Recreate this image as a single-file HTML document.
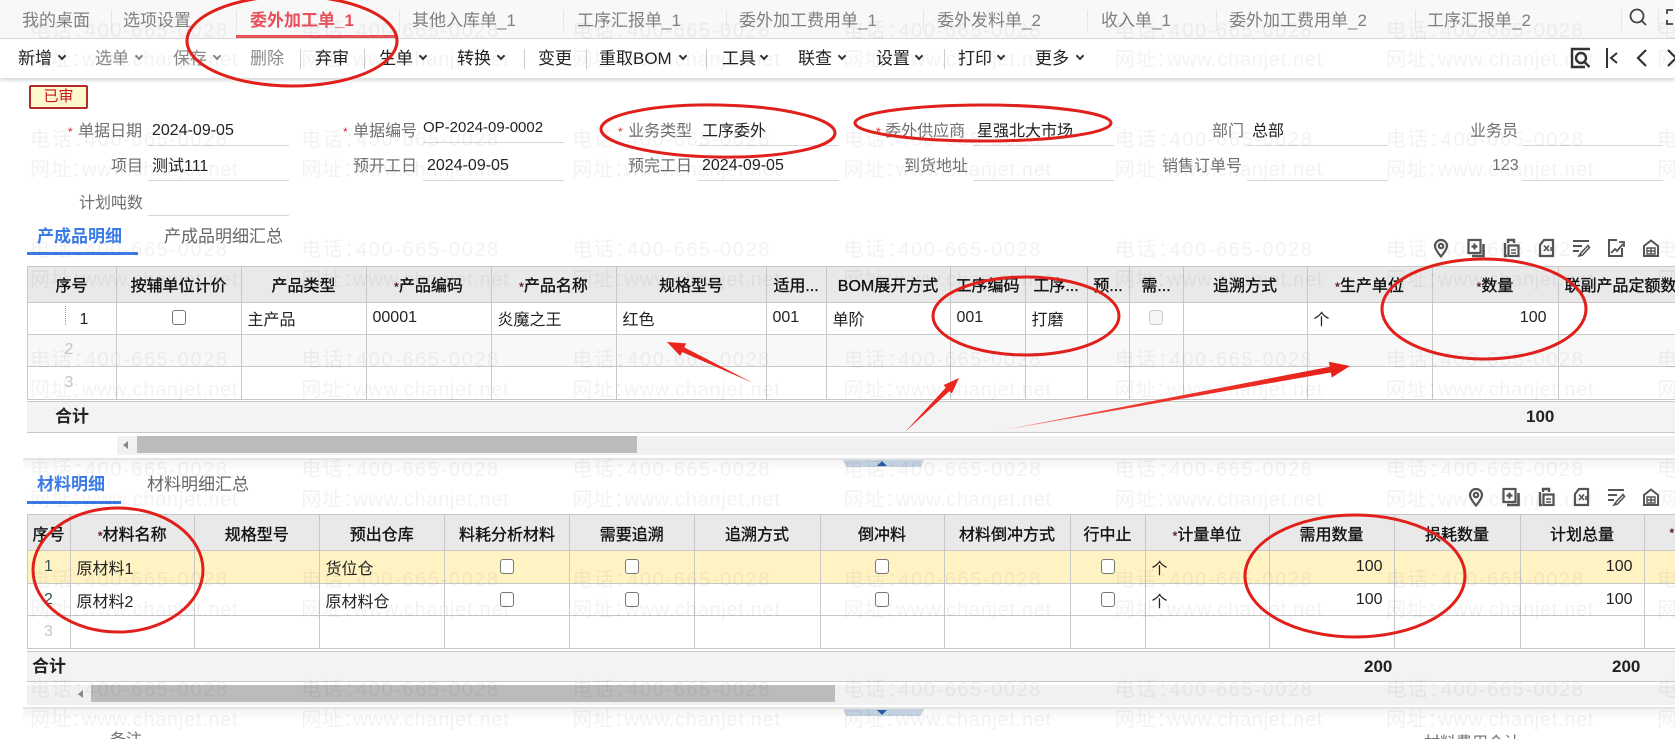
<!DOCTYPE html>
<html lang="zh"><head><meta charset="utf-8"><title>委外加工单</title>
<style>
*{box-sizing:border-box}
html,body{margin:0;padding:0;width:1675px;height:739px;overflow:hidden;background:#fff}
body{position:relative;font-family:"Liberation Sans","Noto Sans CJK SC",sans-serif;font-size:16px;color:#222}
.abs,.tabs span,.tools span,.tools i,.f{position:absolute;white-space:nowrap}
.tabs{position:absolute;left:0;top:0;width:1675px;height:39px;background:#f8f8f8;border-bottom:1px solid #ddd}
.tabs span{top:9px;line-height:24px;font-size:17px;color:#808080}
.tabs span.on{color:#e8505b;font-weight:bold}
.tabs u{position:absolute;top:10px;width:1px;height:21px;background:#e6e6e6}
.tabs em{position:absolute;left:236px;top:35px;width:161px;height:3px;background:#e8505b}
.tools{position:absolute;left:0;top:39px;width:1675px;height:39px;background:#fff;box-shadow:0 2px 4px rgba(0,0,0,.18)}
.tools span{top:8px;line-height:24px;font-size:17px;color:#222}
.tools .g{color:#8a8a8a}
.tools i{top:14px;width:6px;height:6px;border-right:2px solid #333;border-bottom:2px solid #333;transform:rotate(45deg)}
.tools i.g{border-color:#888}
.tools u{position:absolute;top:10px;width:1px;height:20px;background:#ccc}
.f{line-height:22px;font-size:16px}
.l{color:#707070}
.r{color:#e5233a;font-size:12px;font-weight:normal}
.ln{position:absolute;height:1px;background:#d8d8d8;width:141px}
.tab1{position:absolute;line-height:24px;font-size:17px;color:#666}
.tab1.on{color:#3b7be8;font-weight:bold}
.bar{position:absolute;height:3px;background:#3b7be8}
table{position:absolute;border-collapse:collapse;table-layout:fixed;left:26.500px;border-top:1px solid #c8c8c8;border-left:1px solid #c8c8c8}
th,td{border:1px solid #c8c8c8;padding:0;white-space:nowrap;overflow:hidden;font-size:16px}
th{background:#e9e9e9;font-weight:normal;color:#111;-webkit-text-stroke:.35px #111;text-align:center}
td{padding:0 6px;color:#222}
.n{text-align:right;padding-right:11px}
.c{text-align:center}
.cb{display:inline-block;width:14px;height:15px;border:1px solid #777;border-radius:3px;background:#fff;vertical-align:middle}
.cb.d{border-color:#ccc;background:#f5f5f5}
.sum{position:absolute;left:27px;width:1648px;background:#f3f3f3;border-top:1px solid #c8c8c8;border-bottom:1px solid #c8c8c8}
.sum b{position:absolute;font-size:17px;line-height:24px;color:#222;top:3px}
.track{position:absolute;background:#f1f1f1}
.thumb{position:absolute;background:#bbb}
.split{position:absolute;left:843px;width:81px;height:7px;background:#c3d0e0;clip-path:polygon(0 0,100% 0,96% 100%,4% 100%)}
.div{position:absolute;left:23px;width:1652px;height:14px;border-top:2px solid #e4e4e4;background:linear-gradient(#f4f4f4,#fff)}
.wm{position:absolute;left:30px;white-space:nowrap;font-size:20px;line-height:24px;color:rgba(0,0,0,.05);pointer-events:none;font-feature-settings:"halt"}
.wm span{display:inline-block;width:271.2px}
.t{letter-spacing:1.6px}.w{letter-spacing:.7px}
svg.ic{position:absolute;width:20px;height:20px;fill:none;stroke:#555;stroke-width:2.200}
</style></head>
<body>
<svg width="0" height="0" style="position:absolute">
<symbol id="pin" viewBox="0 0 20 20"><path d="M10 2a6 6 0 0 1 6 6c0 3.600-6 10.500-6 10.500S4 11.600 4 8a6 6 0 0 1 6-6z"/><circle cx="10" cy="8" r="2.200"/></symbol>
<symbol id="add" viewBox="0 0 20 20"><path d="M2.500 2h12v13h-12z"/><path d="M17.500 6v12H6" stroke-width="2.600"/><path d="M8.500 5.500v6M5.500 8.500h6"/></symbol>
<symbol id="paste" viewBox="0 0 20 20"><path d="M4 5v13h2M7 5V2h6v3" stroke-width="2.400"/><path d="M7.500 7.500h10v10.500h-10z"/><path d="M10 12h5M10 15h5" stroke-width="1.500"/></symbol>
<symbol id="del" viewBox="0 0 20 20"><path d="M4 7v11h13v-16H8z"/><path d="M8 7.500l5 5.500M13 7.500l-5 5.500M15 9v4" stroke-width="1.600"/></symbol>
<symbol id="edit" viewBox="0 0 20 20"><path d="M2 3h16M2 8h9M2 13h6" stroke-width="2"/><path d="M17 7.500l-7 7.500-2 3 3.500-1 7-7.500z" stroke-width="1.600"/></symbol>
<symbol id="chart" viewBox="0 0 20 20"><path d="M11 2H3v16h13v-8" stroke-width="2"/><path d="M5 15l4-4 2 2 6-7M13 4h5v5" stroke-width="1.800"/></symbol>
<symbol id="house" viewBox="0 0 20 20"><path d="M3 18V8l7-5.500L17 8v10z" stroke-width="2"/><path d="M6 10h8v6H6zM10 10v6M6 13h8" stroke-width="1.400"/></symbol>
</svg>

<div class="tabs">
<span style="left:22px">我的桌面</span><span style="left:123px">选项设置</span><span class="on" style="left:250px">委外加工单_1</span><span style="left:412px">其他入库单_1</span><span style="left:577px">工序汇报单_1</span><span style="left:739px">委外加工费用单_1</span><span style="left:937px">委外发料单_2</span><span style="left:1101px">收入单_1</span><span style="left:1229px">委外加工费用单_2</span><span style="left:1427px">工序汇报单_2</span>
<u style="left:111px"></u><u style="left:236px"></u><u style="left:399px"></u><u style="left:563px"></u><u style="left:726px"></u><u style="left:923px"></u><u style="left:1087px"></u><u style="left:1216px"></u><u style="left:1415px"></u><u style="left:1621px"></u><u style="left:1658px"></u>
<em></em>
<svg class="abs" style="left:1628px;top:7px;width:20px;height:20px;fill:none;stroke:#444;stroke-width:1.800" viewBox="0 0 20 20"><circle cx="9" cy="9" r="6.500"/><path d="M14 14l4 4"/></svg>
<svg class="abs" style="left:1666px;top:9px;width:12px;height:16px;fill:none;stroke:#444;stroke-width:1.800" viewBox="0 0 12 16"><path d="M1 5V1h6M1 11v4h6"/></svg>
</div>

<div class="tools">
<span style="left:18px">新增</span><i style="left:59px"></i>
<span class="g" style="left:95px">选单</span><i class="g" style="left:136px"></i>
<span class="g" style="left:173px">保存</span><i class="g" style="left:214px"></i>
<span class="g" style="left:250px">删除</span><u style="left:300px"></u>
<span style="left:315px">弃审</span><u style="left:364px"></u>
<span style="left:379px">生单</span><i style="left:420px"></i>
<span style="left:457px">转换</span><i style="left:498px"></i><u style="left:524px"></u>
<span style="left:538px">变更</span><u style="left:586px"></u>
<span style="left:599px">重取BOM</span><i style="left:680px"></i><u style="left:706px"></u>
<span style="left:722px">工具</span><i style="left:761px"></i>
<span style="left:798px">联查</span><i style="left:839px"></i>
<span style="left:876px">设置</span><i style="left:916px"></i><u style="left:944px"></u>
<span style="left:958px">打印</span><i style="left:998px"></i>
<span style="left:1035px">更多</span><i style="left:1077px"></i>
<svg class="abs" style="left:1570px;top:8px;width:22px;height:22px;fill:none;stroke:#333;stroke-width:2.400" viewBox="0 0 22 22"><path d="M20 2H2v18h13"/><circle cx="11" cy="11" r="5"/><path d="M14.500 15l5 5"/></svg>
<svg class="abs" style="left:1605px;top:9px;width:14px;height:20px;fill:none;stroke:#333;stroke-width:2" viewBox="0 0 14 20"><path d="M2 0v20M12 5L6 10l6 5"/></svg>
<svg class="abs" style="left:1636px;top:9px;width:12px;height:20px;fill:none;stroke:#333;stroke-width:2.200" viewBox="0 0 12 20"><path d="M10 2L2 10l8 8"/></svg>
<svg class="abs" style="left:1666px;top:9px;width:12px;height:20px;fill:none;stroke:#333;stroke-width:2.200" viewBox="0 0 12 20"><path d="M2 2l8 8-8 8"/></svg>
</div>

<div class="abs" style="left:29px;top:85px;width:59px;height:24px;background:#fff9cc;border:2px solid #b32a2a;border-radius:2px;color:#c4161c;font-size:15px;line-height:20px;text-align:center">已审</div>

<!-- form row 1 -->
<span class="f l" style="left:68px;top:121px"><b class="r">*</b> <span style="margin-left:1px">单据日期</span></span><span class="f" style="left:152px;top:120px">2024-09-05</span><div class="ln" style="left:148px;top:145px"></div>
<span class="f l" style="left:343px;top:121px"><b class="r">*</b> <span style="margin-left:1px">单据编号</span></span><span class="f" style="left:423px;top:117px;font-size:15px">OP-2024-09-0002</span><div class="ln" style="left:423px;top:142px"></div>
<span class="f l" style="left:618px;top:121px"><b class="r">*</b> <span style="margin-left:1px">业务类型</span></span><span class="f" style="left:702px;top:121px">工序委外</span><div class="ln" style="left:698px;top:145px"></div>
<span class="f l" style="left:876px;top:121px"><b class="r">*</b> 委外供应商</span><span class="f" style="left:977px;top:121px">星强北大市场</span><div class="ln" style="left:973px;top:145px"></div>
<span class="f l" style="left:1212px;top:121px">部门</span><span class="f" style="left:1252px;top:121px">总部</span><div class="ln" style="left:1247px;top:145px"></div>
<span class="f l" style="left:1470px;top:121px">业务员</span><div class="ln" style="left:1522px;top:145px"></div>
<!-- form row 2 -->
<span class="f l" style="left:111px;top:156px">项目</span><span class="f" style="left:152px;top:156px">测试111</span><div class="ln" style="left:148px;top:180px"></div>
<span class="f l" style="left:353px;top:156px">预开工日</span><span class="f" style="left:427px;top:155px">2024-09-05</span><div class="ln" style="left:423px;top:180px"></div>
<span class="f l" style="left:628px;top:156px">预完工日</span><span class="f" style="left:702px;top:155px">2024-09-05</span><div class="ln" style="left:698px;top:180px"></div>
<span class="f l" style="left:904px;top:156px">到货地址</span><div class="ln" style="left:973px;top:180px"></div>
<span class="f l" style="left:1162px;top:156px">销售订单号</span><div class="ln" style="left:1247px;top:180px"></div>
<span class="f l" style="left:1492px;top:155px">123</span><div class="ln" style="left:1522px;top:180px"></div>
<!-- form row 3 -->
<span class="f l" style="left:79px;top:193px">计划吨数</span><div class="ln" style="left:148px;top:215px"></div>

<!-- section 1 -->
<span class="tab1 on" style="left:37px;top:225px">产成品明细</span><span class="tab1" style="left:164px;top:225px">产成品明细汇总</span>
<div class="bar" style="left:27px;top:252px;width:111px"></div>
<svg class="ic" style="left:1431px;top:238px"><use href="#pin"/></svg><svg class="ic" style="left:1466px;top:238px"><use href="#add"/></svg><svg class="ic" style="left:1501px;top:238px"><use href="#paste"/></svg><svg class="ic" style="left:1536px;top:238px"><use href="#del"/></svg><svg class="ic" style="left:1571px;top:238px"><use href="#edit"/></svg><svg class="ic" style="left:1606px;top:238px"><use href="#chart"/></svg><svg class="ic" style="left:1641px;top:238px"><use href="#house"/></svg>

<table style="top:265.500px;width:1656px">
<colgroup><col style="width:89px"><col style="width:125px"><col style="width:125px"><col style="width:125px"><col style="width:125px"><col style="width:150px"><col style="width:60px"><col style="width:124px"><col style="width:75px"><col style="width:62px"><col style="width:42px"><col style="width:54px"><col style="width:124px"><col style="width:125px"><col style="width:126px"><col style="width:125px"></colgroup>
<tr style="height:36px"><th>序号</th><th>按辅单位计价</th><th>产品类型</th><th><b class="r">*</b>产品编码</th><th><b class="r">*</b>产品名称</th><th>规格型号</th><th>适用...</th><th>BOM展开方式</th><th>工序编码</th><th>工序...</th><th>预...</th><th>需...</th><th>追溯方式</th><th><b class="r">*</b>生产单位</th><th><b class="r">*</b>数量</th><th>联副产品定额数</th></tr>
<tr style="height:32px"><td style="padding:3px 0 0 52px">1</td><td class="c"><span class="cb"></span></td><td>主产品</td><td>00001</td><td>炎魔之王</td><td>红色</td><td>001</td><td>单阶</td><td>001</td><td>打磨</td><td></td><td class="c"><span class="cb d"></span></td><td></td><td>个</td><td class="n">100</td><td></td></tr>
<tr style="height:32px;background:#f8f8f8"><td style="padding-left:37px;color:#c4c4c4">2</td><td></td><td></td><td></td><td></td><td></td><td></td><td></td><td></td><td></td><td></td><td></td><td></td><td></td><td></td><td></td></tr>
<tr style="height:33px"><td style="padding-left:37px;color:#c4c4c4">3</td><td></td><td></td><td></td><td></td><td></td><td></td><td></td><td></td><td></td><td></td><td></td><td></td><td></td><td></td><td></td></tr>
</table>
<div class="abs" style="left:65px;top:306px;height:19px;border-left:1px dotted #999"></div>
<div class="sum" style="top:401px;height:32px"><b style="left:28px">合计</b><b style="left:1499px">100</b></div>
<div class="track" style="left:117px;top:436px;width:1558px;height:19px"></div>
<div class="abs" style="left:123px;top:441px;border:4px solid transparent;border-right:5px solid #888;border-left:0"></div>
<div class="thumb" style="left:137px;top:436px;width:500px;height:17px"></div>
<div class="div" style="top:458px"></div>
<div class="split" style="top:460px"></div>
<div class="abs" style="left:877px;top:461px;border:5px solid transparent;border-bottom:5px solid #2a5ca8;border-top:0"></div>

<!-- section 2 -->
<span class="tab1 on" style="left:37px;top:473px">材料明细</span><span class="tab1" style="left:147px;top:473px">材料明细汇总</span>
<div class="bar" style="left:27px;top:501px;width:94px"></div>
<svg class="ic" style="left:1466px;top:487px"><use href="#pin"/></svg><svg class="ic" style="left:1501px;top:487px"><use href="#add"/></svg><svg class="ic" style="left:1536px;top:487px"><use href="#paste"/></svg><svg class="ic" style="left:1571px;top:487px"><use href="#del"/></svg><svg class="ic" style="left:1606px;top:487px"><use href="#edit"/></svg><svg class="ic" style="left:1641px;top:487px"><use href="#house"/></svg>

<table style="top:514px;width:1743px">
<colgroup><col style="width:43px"><col style="width:124.500px"><col style="width:124.500px"><col style="width:125.500px"><col style="width:125px"><col style="width:124.500px"><col style="width:126px"><col style="width:124px"><col style="width:126px"><col style="width:75px"><col style="width:124px"><col style="width:125px"><col style="width:126px"><col style="width:124px"><col style="width:126px"></colgroup>
<tr style="height:36px"><th>序号</th><th><b class="r">*</b>材料名称</th><th>规格型号</th><th>预出仓库</th><th>料耗分析材料</th><th>需要追溯</th><th>追溯方式</th><th>倒冲料</th><th>材料倒冲方式</th><th>行中止</th><th><b class="r">*</b>计量单位</th><th>需用数量</th><th>损耗数量</th><th>计划总量</th><th style="text-align:left;padding-left:25px"><b class="r">*</b></th></tr>
<tr style="height:33px;background:#fff3c4"><td class="c" style="color:#355">1</td><td>原材料1</td><td></td><td>货位仓</td><td class="c"><span class="cb"></span></td><td class="c"><span class="cb"></span></td><td></td><td class="c"><span class="cb"></span></td><td></td><td class="c"><span class="cb"></span></td><td>个</td><td class="n">100</td><td></td><td class="n">100</td><td></td></tr>
<tr style="height:32px"><td class="c" style="color:#355">2</td><td>原材料2</td><td></td><td>原材料仓</td><td class="c"><span class="cb"></span></td><td class="c"><span class="cb"></span></td><td></td><td class="c"><span class="cb"></span></td><td></td><td class="c"><span class="cb"></span></td><td>个</td><td class="n">100</td><td></td><td class="n">100</td><td></td></tr>
<tr style="height:33px"><td class="c" style="color:#c4c4c4">3</td><td></td><td></td><td></td><td></td><td></td><td></td><td></td><td></td><td></td><td></td><td></td><td></td><td></td><td></td></tr>
</table>
<div class="sum" style="top:651px;height:31px"><b style="left:5px">合计</b><b style="left:1337px">200</b><b style="left:1585px">200</b></div>
<div class="track" style="left:27px;top:685px;width:1648px;height:20px"></div>
<div class="abs" style="left:78px;top:690px;border:4px solid transparent;border-right:5px solid #888;border-left:0"></div>
<div class="thumb" style="left:91px;top:685px;width:744px;height:17px"></div>
<div class="div" style="top:707px"></div>
<div class="split" style="top:709px"></div>
<div class="abs" style="left:877px;top:710px;border:5px solid transparent;border-top:5px solid #2a5ca8;border-bottom:0"></div>
<span class="f l" style="left:110px;top:730px">备注</span>
<span class="f l" style="left:1424px;top:733px">材料费用合计</span>

<!-- watermark -->
<div class="wm" style="top:19px"><span class="t">电话：400-665-0028</span><span class="t">电话：400-665-0028</span><span class="t">电话：400-665-0028</span><span class="t">电话：400-665-0028</span><span class="t">电话：400-665-0028</span><span class="t">电话：400-665-0028</span><span class="t">电话：400-665-0028</span></div>
<div class="wm" style="top:48px"><span class="w">网址：www.chanjet.net</span><span class="w">网址：www.chanjet.net</span><span class="w">网址：www.chanjet.net</span><span class="w">网址：www.chanjet.net</span><span class="w">网址：www.chanjet.net</span><span class="w">网址：www.chanjet.net</span><span class="w">网址：www.chanjet.net</span></div>
<div class="wm" style="top:128px"><span class="t">电话：400-665-0028</span><span class="t">电话：400-665-0028</span><span class="t">电话：400-665-0028</span><span class="t">电话：400-665-0028</span><span class="t">电话：400-665-0028</span><span class="t">电话：400-665-0028</span><span class="t">电话：400-665-0028</span></div>
<div class="wm" style="top:158px"><span class="w">网址：www.chanjet.net</span><span class="w">网址：www.chanjet.net</span><span class="w">网址：www.chanjet.net</span><span class="w">网址：www.chanjet.net</span><span class="w">网址：www.chanjet.net</span><span class="w">网址：www.chanjet.net</span><span class="w">网址：www.chanjet.net</span></div>
<div class="wm" style="top:238px"><span class="t">电话：400-665-0028</span><span class="t">电话：400-665-0028</span><span class="t">电话：400-665-0028</span><span class="t">电话：400-665-0028</span><span class="t">电话：400-665-0028</span><span class="t">电话：400-665-0028</span><span class="t">电话：400-665-0028</span></div>
<div class="wm" style="top:268px"><span class="w">网址：www.chanjet.net</span><span class="w">网址：www.chanjet.net</span><span class="w">网址：www.chanjet.net</span><span class="w">网址：www.chanjet.net</span><span class="w">网址：www.chanjet.net</span><span class="w">网址：www.chanjet.net</span><span class="w">网址：www.chanjet.net</span></div>
<div class="wm" style="top:348px"><span class="t">电话：400-665-0028</span><span class="t">电话：400-665-0028</span><span class="t">电话：400-665-0028</span><span class="t">电话：400-665-0028</span><span class="t">电话：400-665-0028</span><span class="t">电话：400-665-0028</span><span class="t">电话：400-665-0028</span></div>
<div class="wm" style="top:378px"><span class="w">网址：www.chanjet.net</span><span class="w">网址：www.chanjet.net</span><span class="w">网址：www.chanjet.net</span><span class="w">网址：www.chanjet.net</span><span class="w">网址：www.chanjet.net</span><span class="w">网址：www.chanjet.net</span><span class="w">网址：www.chanjet.net</span></div>
<div class="wm" style="top:458px"><span class="t">电话：400-665-0028</span><span class="t">电话：400-665-0028</span><span class="t">电话：400-665-0028</span><span class="t">电话：400-665-0028</span><span class="t">电话：400-665-0028</span><span class="t">电话：400-665-0028</span><span class="t">电话：400-665-0028</span></div>
<div class="wm" style="top:488px"><span class="w">网址：www.chanjet.net</span><span class="w">网址：www.chanjet.net</span><span class="w">网址：www.chanjet.net</span><span class="w">网址：www.chanjet.net</span><span class="w">网址：www.chanjet.net</span><span class="w">网址：www.chanjet.net</span><span class="w">网址：www.chanjet.net</span></div>
<div class="wm" style="top:568px"><span class="t">电话：400-665-0028</span><span class="t">电话：400-665-0028</span><span class="t">电话：400-665-0028</span><span class="t">电话：400-665-0028</span><span class="t">电话：400-665-0028</span><span class="t">电话：400-665-0028</span><span class="t">电话：400-665-0028</span></div>
<div class="wm" style="top:598px"><span class="w">网址：www.chanjet.net</span><span class="w">网址：www.chanjet.net</span><span class="w">网址：www.chanjet.net</span><span class="w">网址：www.chanjet.net</span><span class="w">网址：www.chanjet.net</span><span class="w">网址：www.chanjet.net</span><span class="w">网址：www.chanjet.net</span></div>
<div class="wm" style="top:678px"><span class="t">电话：400-665-0028</span><span class="t">电话：400-665-0028</span><span class="t">电话：400-665-0028</span><span class="t">电话：400-665-0028</span><span class="t">电话：400-665-0028</span><span class="t">电话：400-665-0028</span><span class="t">电话：400-665-0028</span></div>
<div class="wm" style="top:708px"><span class="w">网址：www.chanjet.net</span><span class="w">网址：www.chanjet.net</span><span class="w">网址：www.chanjet.net</span><span class="w">网址：www.chanjet.net</span><span class="w">网址：www.chanjet.net</span><span class="w">网址：www.chanjet.net</span><span class="w">网址：www.chanjet.net</span></div>

<!-- red annotations -->
<svg class="abs" style="left:0;top:0" width="1675" height="739" viewBox="0 0 1675 739" fill="none" stroke="#e0201b" stroke-width="3">
<defs><linearGradient id="fade" x1="0" x2="1" y1="0" y2="0"><stop offset="0" stop-color="#f6a0a0"/><stop offset=".35" stop-color="#ee3a30"/><stop offset="1" stop-color="#e81f17"/></linearGradient></defs>
<ellipse cx="292" cy="41" rx="105" ry="45"/>
<ellipse cx="718" cy="131" rx="117" ry="26" transform="rotate(1 718 131)"/>
<ellipse cx="983" cy="123" rx="128" ry="18"/>
<ellipse cx="1026" cy="316" rx="93" ry="39"/>
<ellipse cx="1484" cy="309" rx="102" ry="50"/>
<ellipse cx="118" cy="570" rx="85" ry="62"/>
<ellipse cx="1355" cy="576" rx="110" ry="61"/>
<g stroke="none">
<polygon fill="#e9261f" points="753,383 684.300,347.400 686.200,343.400 667,342 680.200,356 682.100,352"/>
<polygon fill="#e9261f" points="905,432 949.500,391.100 951.900,393.500 959,378 943.500,385.100 945.900,387.500"/>
<polygon fill="url(#fade)" points="998,431 1330.800,372.500 1331.800,377.500 1350,366 1328.800,361.700 1329.800,366.700"/>
</g>
</svg>
</body></html>
